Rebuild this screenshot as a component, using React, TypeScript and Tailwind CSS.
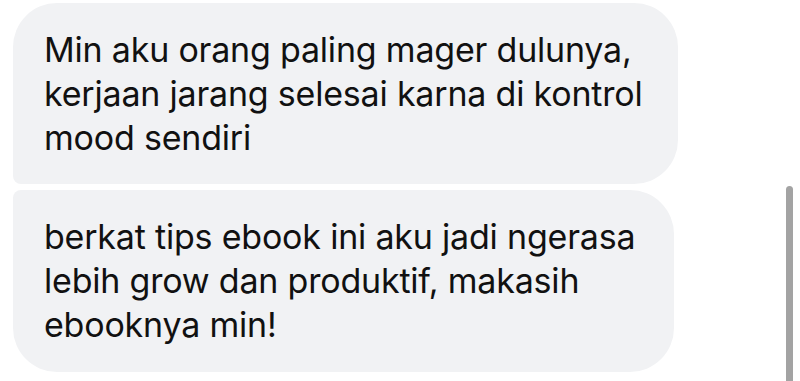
import React from "react";

export default function App() {
  return (
    <div
      className="relative w-[800px] h-[381px] bg-white overflow-hidden"
      style={{ fontFamily: "Inter, 'Noto Sans', sans-serif" }}
    >
      <div className="flex flex-col gap-[6px] pt-[3px] pl-[13px]">
        <div className="w-[665px] h-[181px] bg-[#f1f2f4] rounded-tl-[44px] rounded-tr-[44px] rounded-br-[44px] rounded-bl-[8px] pl-[31px] pt-[25px]">
          <p className="text-[34px] leading-[44px] text-[#111111] tracking-[-0.2px]">
            Min aku orang paling mager dulunya,
            <br />
            kerjaan jarang selesai karna di kontrol
            <br />
            mood sendiri
          </p>
        </div>
        <div className="w-[661px] h-[182px] bg-[#f1f2f4] rounded-tl-[8px] rounded-tr-[44px] rounded-br-[44px] rounded-bl-[44px] pl-[31px] pt-[25px]">
          <p className="text-[34px] leading-[44px] text-[#111111] tracking-[-0.2px]">
            berkat tips ebook ini aku jadi ngerasa
            <br />
            lebih grow dan produktif, makasih
            <br />
            ebooknya min!
          </p>
        </div>
      </div>
      <div className="absolute left-[786px] top-[186px] w-[7px] h-[200px] rounded-t-full bg-[#a3a3a3]" />
    </div>
  );
}
